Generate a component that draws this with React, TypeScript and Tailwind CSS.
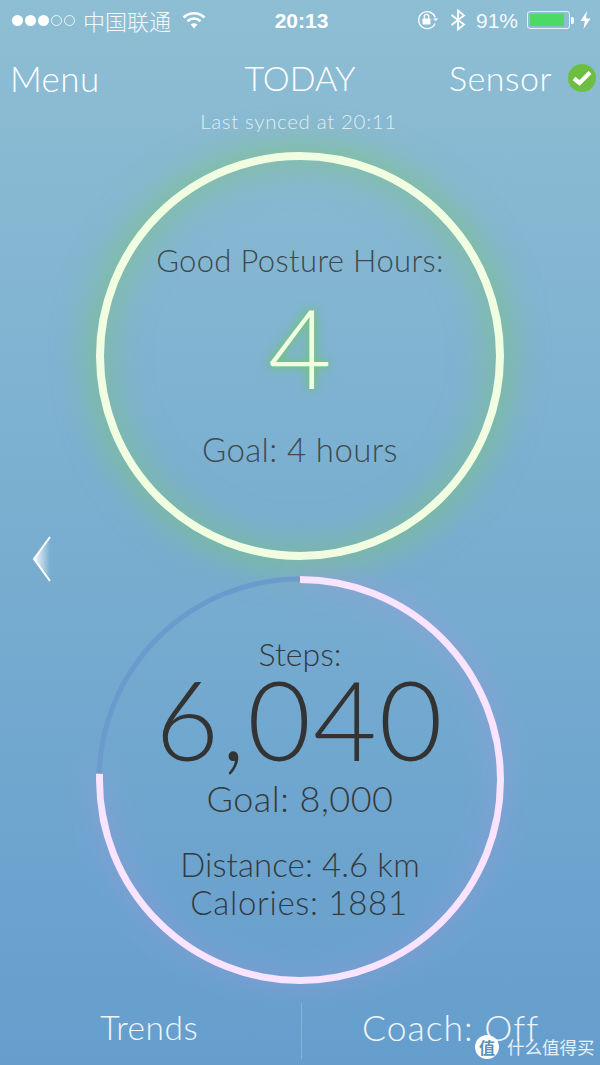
import React from "react";

const thin = { fontFamily: "Lato, 'Noto Sans', sans-serif" };
const stepsPercent = (6040 / 8000) * 100;

function StatusBar() {
  return (
    <div className="grid grid-cols-[1fr_auto_1fr] items-center h-[40px] pl-[12px] pr-[9px] text-white">
      <div className="flex items-center">
        <div className="flex items-center gap-[2px]">
          {[0, 1, 2].map((i) => (
            <span key={i} className="w-[11px] h-[11px] rounded-full bg-white" />
          ))}
          {[0, 1].map((i) => (
            <span key={i} className="w-[11px] h-[11px] rounded-full border border-white/80" />
          ))}
        </div>
        <span
          className="ml-[8px] text-[22px] font-light leading-none text-white/90"
          style={{ fontFamily: "'Noto Sans CJK SC', sans-serif" }}
        >
          中国联通
        </span>
        <svg className="ml-[11px]" width="24" height="18" viewBox="0 0 24 18" fill="none" stroke="white" strokeWidth="2.6">
          <path d="M1.5 6.5 C7.5 0.8 16.5 0.8 22.5 6.5" />
          <path d="M5.5 10.2 C9.3 6.6 14.7 6.6 18.5 10.2" />
          <path d="M12 17.5 L8.6 13.5 C10.6 11.8 13.4 11.8 15.4 13.5 Z" fill="white" stroke="none" />
        </svg>
      </div>
      <span className="text-[21px] font-bold leading-none" style={{ fontFamily: "'Liberation Sans', sans-serif" }}>
        20:13
      </span>
      <div className="flex items-center justify-end">
        <svg width="22" height="20" viewBox="0 0 22 20" fill="none" stroke="white" strokeWidth="1.3">
          <path d="M18 13.5 A8.5 8.5 0 1 1 18.3 7.5" />
          <path d="M16 8.5 H21.5 L18.7 11 Z" fill="white" stroke="none" />
          <rect x="5.5" y="8.5" width="8" height="6" rx="1" fill="white" stroke="none" />
          <path d="M7.3 8.5 V6.5 A2.2 2.2 0 0 1 11.7 6.5 V8.5" />
        </svg>
        <svg className="ml-[11px]" width="16" height="22" viewBox="0 0 16 22" fill="none" stroke="white" strokeWidth="1.8">
          <path d="M1.5 6 L14 15.5 L8 20.5 V1.5 L14 6.5 L1.5 16" />
        </svg>
        <span className="ml-[10px] text-[21px] font-light leading-none text-white/95" style={{ fontFamily: "'Liberation Sans', sans-serif" }}>
          91%
        </span>
        <div className="ml-[9px] w-[43px] h-[18px] rounded-[3px] border border-white/80 p-[2px]">
          <div className="h-full w-[91%] bg-[#4cd964] rounded-[1px]" />
        </div>
        <span className="ml-[1px] w-[3px] h-[7px] bg-white/90 rounded-r-[2px]" />
        <svg className="ml-[6px]" width="11" height="18" viewBox="0 0 11 18" fill="white">
          <path d="M7 0 L0.5 10 H4.8 L3.5 18 L10.5 7.5 H6 Z" />
        </svg>
      </div>
    </div>
  );
}

function Header() {
  return (
    <div className="text-white" style={thin}>
      <div className="grid grid-cols-[1fr_auto_1fr] items-center h-[76px] pl-[10px] pr-[4px] font-light text-[35px] leading-none">
        <span className="tracking-[0.4px]">Menu</span>
        <span className="text-center whitespace-nowrap text-[34px] pr-[6px]">TODAY</span>
        <div className="flex items-center justify-end gap-[16px]">
          <span className="text-[34px] tracking-[0.5px]">Sensor</span>
          <div className="w-[28px] h-[28px] rounded-full bg-[#6fbe44] flex items-center justify-center">
            <svg width="20" height="16" viewBox="0 0 20 16" fill="none" stroke="white" strokeWidth="4.2">
              <path d="M2 8.5 L7.5 13 L18 2.5" />
            </svg>
          </div>
        </div>
      </div>
      <p className="text-center text-[20.5px] font-light leading-[22px] tracking-[0.65px] pr-[3px] text-white/75 mt-[-6px] h-[22px]">
        Last synced at 20:11
      </p>
    </div>
  );
}

function PostureCircle() {
  return (
    <div
      className="mx-auto w-[408px] h-[408px] rounded-full border-[8px] border-[#f1fde0] shadow-[0_0_34px_8px_rgba(125,195,125,0.65),inset_0_0_34px_8px_rgba(125,195,125,0.55)] flex flex-col items-center text-[#3d4a50] font-light leading-[35px]"
      style={thin}
    >
      <p className="mt-[83px] text-[31px] tracking-[0.35px] whitespace-nowrap">Good Posture Hours:</p>
      <p className="mt-[13px] text-[#f1fde0] text-[110px] leading-[110px] font-light [text-shadow:0_0_14px_rgba(110,200,110,0.95),0_0_6px_rgba(110,200,110,0.9)]">
        4
      </p>
      <p className="mt-[31px] text-[33px] tracking-[0.4px]">Goal: 4 hours</p>
    </div>
  );
}

function StepsCircle() {
  return (
    <div className="relative mx-auto w-[408px] h-[408px] mt-[16px]">
      <svg className="absolute inset-0 -rotate-90 overflow-visible" width="408" height="408" viewBox="0 0 408 408" fill="none">
        <circle cx="204" cy="204" r="201" stroke="#6b9bcc" strokeWidth="5" />
        <circle
          className="drop-shadow-[0_0_12px_rgba(175,145,225,0.75)]"
          cx="204"
          cy="204"
          r="200.5"
          stroke="#f9e3fe"
          strokeWidth="7"
          pathLength={100}
          strokeDasharray={`${stepsPercent} 100`}
        />
      </svg>
      <div className="relative flex flex-col items-center text-[#333a40] font-light leading-[35px]" style={thin}>
        <p className="mt-[60px] text-[32px]">Steps:</p>
        <p className="mt-[-8px] text-[#333333] text-[110px] leading-[110px] font-light tracking-[2px]">6,040</p>
        <p className="mt-[8px] text-[36px] tracking-[0.5px]">Goal: 8,000</p>
        <div className="mt-[29px] text-[33px] leading-[38px] text-center">
          <p className="tracking-[0.1px]">Distance: 4.6 km</p>
          <p className="tracking-[0.7px] pr-[2px]">Calories: 1881</p>
        </div>
      </div>
    </div>
  );
}

function BackArrow() {
  return (
    <svg className="absolute left-[32px] top-[535px]" width="20" height="48" viewBox="0 0 20 48" fill="none">
      <defs>
        <linearGradient id="arrowFill" x1="0" x2="1" y1="0" y2="0">
          <stop offset="0" stopColor="white" stopOpacity="0.95" />
          <stop offset="1" stopColor="white" stopOpacity="0" />
        </linearGradient>
      </defs>
      <path d="M18 2 L2 24 L18 46 Z" fill="url(#arrowFill)" />
      <path d="M18 2 L2 24 L18 46" stroke="white" strokeWidth="2" />
    </svg>
  );
}

function BottomBar() {
  return (
    <div className="flex items-center h-[56px] mt-[19px] text-white/90 font-light leading-none" style={thin}>
      <span className="flex-1 text-center text-[33.5px] tracking-[0.5px] pr-[2px] pb-[6px]">Trends</span>
      <span className="w-[1px] h-full bg-white/20" />
      <span className="flex-1 text-center text-[35.5px] tracking-[1px] pb-[6px]">Coach: Off</span>
    </div>
  );
}

function Watermark() {
  return (
    <div className="absolute left-[475px] top-[1035px] flex items-center whitespace-nowrap">
      <div className="w-[24px] h-[24px] rounded-full bg-white flex items-center justify-center">
        <span className="text-[16px] leading-none text-[#5d8fb8] font-bold" style={{ fontFamily: "'Noto Sans CJK SC', sans-serif" }}>
          值
        </span>
      </div>
      <span className="ml-[8px] text-[17.5px] leading-none text-white/85" style={{ fontFamily: "'Noto Sans CJK SC', sans-serif" }}>
        什么值得买
      </span>
    </div>
  );
}

export default function App() {
  return (
    <div className="relative w-[600px] h-[1065px] overflow-hidden bg-gradient-to-b from-[#8ebed3] to-[#659ecd]">
      <StatusBar />
      <Header />
      <div className="mt-[20px]">
        <PostureCircle />
        <StepsCircle />
      </div>
      <BottomBar />
      <BackArrow />
      <Watermark />
    </div>
  );
}
